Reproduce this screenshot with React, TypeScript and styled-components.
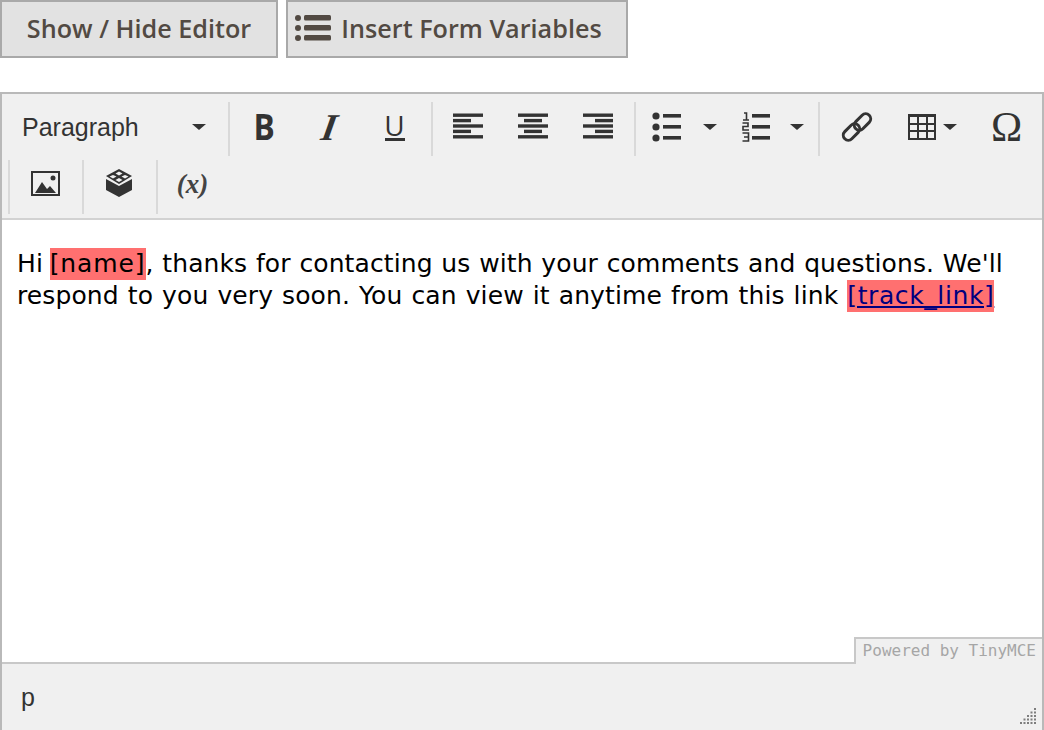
import React from "react";
import styled, { createGlobalStyle } from "styled-components";

const GlobalStyle = createGlobalStyle`
	html, body {
		margin: 0;
		padding: 0;
		background: #fff;
	}
	* {
		box-sizing: border-box;
	}
`;

const Page = styled.div`
	width: 1044px;
	height: 730px;
	overflow: hidden;
	display: flex;
	flex-direction: column;
`;

const ActionRow = styled.div`
	display: flex;
	gap: 8px;
	height: 58px;
	margin-bottom: 34px;
`;

const ActionButton = styled.button<{ $width: number; $endSpace?: number }>`
	width: ${(p) => p.$width}px;
	height: 58px;
	padding: 0 ${(p) => p.$endSpace || 0}px 2px 0;
	display: flex;
	align-items: center;
	justify-content: center;
	gap: 9px;
	background: #e2e2e2;
	border: 2px solid #a9a9a9;
	color: #524a43;
	font-family: "Open Sans", sans-serif;
	font-weight: 600;
	font-size: 25.2px;
`;

const Editor = styled.div`
	flex: 1;
	display: flex;
	flex-direction: column;
	border: 2px solid #b9b9b9;
	border-bottom: none;
	position: relative;
`;

const Toolbar = styled.div`
	height: 126px;
	padding-top: 8px;
	background: #f0f0f0;
	border-bottom: 2px solid #d2d2d2;
	display: flex;
	flex-direction: column;
	gap: 4px;
`;

const ToolRow = styled.div<{ $indent?: number }>`
	display: flex;
	height: 54px;
	padding-left: ${(p) => p.$indent || 0}px;
`;

const SelectBox = styled.div`
	width: 227px;
	display: flex;
	align-items: center;
	justify-content: space-between;
	padding: 0 22px 4px 20px;
	font-family: "Liberation Sans", Arial, sans-serif;
	font-size: 25px;
	color: #333;
`;

const Group = styled.div<{ $endPad?: number }>`
	display: flex;
	height: 54px;
	padding: 0 ${(p) => p.$endPad || 4}px 0 2px;
	border-left: 2px solid #d9d9d9;
`;

const ToolButton = styled.div<{ $width?: number; $gap?: number; $shift?: number; $lift?: number }>`
	width: ${(p) => p.$width || 65}px;
	display: flex;
	align-items: center;
	justify-content: center;
	gap: ${(p) => p.$gap || 0}px;
	padding-left: ${(p) => p.$shift || 0}px;
	padding-bottom: ${(p) => p.$lift || 4}px;
	color: #333;
`;

const Caret = styled.span`
	width: 0;
	height: 0;
	border-left: 7px solid transparent;
	border-right: 7px solid transparent;
	border-top: 6px solid #333;
`;

const GlyphBold = styled.span`
	font-family: "Open Sans", sans-serif;
	font-weight: 700;
	font-size: 36px;
	line-height: 1;
	transform: scaleX(0.88);
`;

const GlyphItalic = styled.span`
	font-family: "Liberation Serif", serif;
	font-style: italic;
	font-weight: 700;
	font-size: 38px;
	line-height: 1;
	transform: skewX(-10deg);
`;

const GlyphUnderline = styled.span`
	font-family: "Open Sans", sans-serif;
	font-size: 28px;
	line-height: 25px;
	height: 28px;
	width: 20px;
	display: flex;
	justify-content: center;
	border-bottom: 3px solid #333;
`;

const GlyphOmega = styled.span`
	font-family: "Liberation Serif", serif;
	font-size: 42px;
	line-height: 1;
`;

const GlyphVariable = styled.span`
	font-family: "Liberation Serif", serif;
	font-style: italic;
	font-weight: 700;
	font-size: 27px;
	color: #444;
`;

const Content = styled.div`
	flex: 1;
	background: #fff;
	padding: 28px 16px 0 15px;
	font-family: "DejaVu Sans", Verdana, sans-serif;
	font-size: 25px;
	line-height: 32px;
	letter-spacing: 0.1px;
	color: #000;
`;

const TextLine = styled.div<{ $wordSpacing: number }>`
	white-space: nowrap;
	word-spacing: ${(p) => p.$wordSpacing}px;
`;

const Variable = styled.span<{ $spacing: number; $pull?: number }>`
	display: inline-block;
	background: #ff7070;
	line-height: 32px;
	letter-spacing: ${(p) => p.$spacing}px;
	margin-left: ${(p) => -(p.$pull || 0)}px;
`;

const VariableLink = styled.a`
	color: #00007f;
	text-decoration: underline;
`;

const Branding = styled.div`
	position: absolute;
	right: 0;
	bottom: 66px;
	height: 27px;
	width: 188px;
	display: flex;
	align-items: center;
	justify-content: flex-end;
	padding: 0 6px 3px 0;
	background: #f0f0f0;
	border-top: 2px solid #c8c8c8;
	border-left: 2px solid #c8c8c8;
	font-family: "DejaVu Sans Mono", monospace;
	font-size: 16px;
	color: #a6a6a6;
`;

const StatusBar = styled.div`
	height: 68px;
	display: flex;
	align-items: center;
	justify-content: space-between;
	padding: 0 6px 0 19px;
	background: #f0f0f0;
	border-top: 2px solid #c8c8c8;
	font-family: "Liberation Sans", Arial, sans-serif;
	font-size: 25px;
	color: #333;
`;

const Grip = styled.svg`
	align-self: flex-end;
	margin-bottom: 6px;
`;

const Icon = ({ children }: { children: React.ReactNode }) => (
	<svg width="32" height="32" viewBox="0 0 32 32" fill="#333">
		{children}
	</svg>
);

const AlignIcon = ({ bars }: { bars: number[][] }) => (
	<Icon>
		{bars.map(([x, w], i) => (
			<rect key={i} x={x} y={2.5 + i * 5.4} width={w} height={3.4} />
		))}
	</Icon>
);

const ListIcon = () => (
	<Icon>
		<circle cx="4" cy="5" r="3.6" />
		<circle cx="4" cy="16" r="3.6" />
		<circle cx="4" cy="27" r="3.6" />
		<rect x="11" y="3" width="18" height="3.6" />
		<rect x="11" y="14" width="18" height="3.6" />
		<rect x="11" y="25" width="18" height="3.6" />
	</Icon>
);

const NumberListIcon = () => (
	<Icon>
		<path
			d="M3 2h2.5v7M2 9h6M1.5 12h5.5v3.5H2V19h6M1.5 22h6v8h-6M3 26h4.5"
			fill="none"
			stroke="#333"
			strokeWidth="1.6"
		/>
		<rect x="11" y="3" width="18" height="3.6" />
		<rect x="11" y="14" width="18" height="3.6" />
		<rect x="11" y="25" width="18" height="3.6" />
	</Icon>
);

const LinkIcon = () => (
	<Icon>
		<g fill="none" stroke="#333" strokeWidth="3">
			<rect x="12" y="6" width="19" height="10" rx="5" transform="rotate(-45 21.5 11)" />
			<rect x="1" y="16" width="19" height="10" rx="5" transform="rotate(-45 10.5 21)" />
		</g>
	</Icon>
);

const TableIcon = () => (
	<Icon>
		<path
			fillRule="evenodd"
			d="M2 3h28v26H2zM4 6v6h7V6zm9 0v6h7V6zm9 0v6h6V6zM4 14v5h7v-5zm9 0v5h7v-5zm9 0v5h6v-5zM4 21v6h7v-6zm9 0v6h7v-6zm9 0v6h6v-6z"
		/>
	</Icon>
);

const ImageIcon = () => (
	<Icon>
		<path fillRule="evenodd" d="M2 3h29v25H2zM4 5v21h25V5z" />
		<path d="M6 25l7-11 5 7 3-3 6 7z" />
		<circle cx="24" cy="10" r="2.5" />
	</Icon>
);

const BlockIcon = () => (
	<Icon>
		<path d="M3 11l13 7 13-7v11l-13 7-13-7z" />
		<path
			fillRule="evenodd"
			d="M16 1l13 7-13 8-13-8zM16 3.5l-3.5 2 3.5 2 3.5-2zM10 7l-3.5 1.5 3.5 2 3.5-2zM22 7l-3.5 1.5 3.5 2 3.5-2zM16 10l-3.5 2 3.5 2 3.5-2z"
		/>
	</Icon>
);

const MenuIcon = () => (
	<svg width="38" height="32" viewBox="0 0 38 32" fill="#524a43">
		<circle cx="4" cy="6" r="3" />
		<circle cx="4" cy="16" r="3" />
		<circle cx="4" cy="26" r="3" />
		<rect x="10" y="3" width="27" height="5.5" rx="1.5" />
		<rect x="10" y="13" width="27" height="5.5" rx="1.5" />
		<rect x="10" y="23" width="27" height="5.5" rx="1.5" />
	</svg>
);

// triangle of dots in the resize corner
const gripDots: number[][] = [];
for (let row = 0; row < 5; row++) {
	for (let col = 4 - row; col < 5; col++) {
		gripDots.push([col * 3.5, row * 3.5]);
	}
}

const App = () => {
	return (
		<Page>
			<GlobalStyle />
			<ActionRow>
				<ActionButton $width={278}>Show / Hide Editor</ActionButton>
				<ActionButton $width={342} $endSpace={18}>
					<MenuIcon />
					Insert Form Variables
				</ActionButton>
			</ActionRow>
			<Editor>
				<Toolbar>
					<ToolRow>
						<SelectBox>
							Paragraph
							<Caret />
						</SelectBox>
						<Group>
							<ToolButton>
								<GlyphBold>B</GlyphBold>
							</ToolButton>
							<ToolButton>
								<GlyphItalic>I</GlyphItalic>
							</ToolButton>
							<ToolButton>
								<GlyphUnderline>U</GlyphUnderline>
							</ToolButton>
						</Group>
						<Group>
							<ToolButton>
								<AlignIcon bars={[[1, 30], [1, 18], [1, 30], [1, 18], [1, 30]]} />
							</ToolButton>
							<ToolButton>
								<AlignIcon bars={[[1, 30], [7, 18], [1, 30], [7, 18], [1, 30]]} />
							</ToolButton>
							<ToolButton>
								<AlignIcon bars={[[1, 30], [13, 18], [1, 30], [13, 18], [1, 30]]} />
							</ToolButton>
						</Group>
						<Group>
							<ToolButton $width={88} $gap={19} $shift={4}>
								<ListIcon />
								<Caret />
							</ToolButton>
							<ToolButton $width={88} $gap={17} $shift={5}>
								<NumberListIcon />
								<Caret />
							</ToolButton>
						</Group>
						<Group>
							<ToolButton $width={67} $shift={3}>
								<LinkIcon />
							</ToolButton>
							<ToolButton $width={84} $gap={5}>
								<TableIcon />
								<Caret />
							</ToolButton>
							<ToolButton $shift={2}>
								<GlyphOmega>Ω</GlyphOmega>
							</ToolButton>
						</Group>
					</ToolRow>
					<ToolRow $indent={6}>
						<Group $endPad={5}>
							<ToolButton $lift={6}>
								<ImageIcon />
							</ToolButton>
						</Group>
						<Group $endPad={5}>
							<ToolButton $lift={6}>
								<BlockIcon />
							</ToolButton>
						</Group>
						<Group $endPad={5}>
							<ToolButton $lift={6}>
								<GlyphVariable>(x)</GlyphVariable>
							</ToolButton>
						</Group>
					</ToolRow>
				</Toolbar>
				<Content>
					<TextLine $wordSpacing={0.7}>
						Hi{" "}
						<Variable $spacing={0.9} $pull={2}>
							[name]
						</Variable>
						, thanks for contacting us with your comments and questions. We'll
					</TextLine>
					<TextLine $wordSpacing={1}>
						respond to you very soon. You can view it anytime from this link{" "}
						<Variable $spacing={0.6}>
							<VariableLink href="#">[track_link]</VariableLink>
						</Variable>
					</TextLine>
				</Content>
				<Branding>Powered by TinyMCE</Branding>
				<StatusBar>
					p
					<Grip width="16" height="16" viewBox="0 0 16 16" fill="#7d7d7d">
						{gripDots.map(([x, y], i) => (
							<rect key={i} x={x} y={y} width="2" height="2" />
						))}
					</Grip>
				</StatusBar>
			</Editor>
		</Page>
	);
};

export default App;
